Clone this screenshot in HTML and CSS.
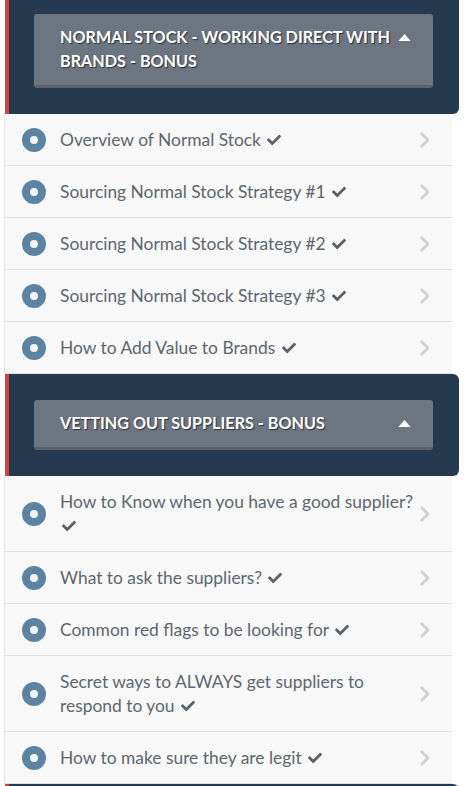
FILE: index.html
```html
<!DOCTYPE html>
<html lang="en">
<head>
  <meta charset="UTF-8">
  <meta name="viewport" content="width=device-width, initial-scale=1.0">
  <title>Course curriculum</title>
  <link rel="stylesheet" href="styles.css">
</head>
<body>
  <div class="curriculum">

    <div class="section">
      <div class="section-header">
        <div class="section-title">
          <span class="title-text">NORMAL STOCK - WORKING DIRECT WITH BRANDS - BONUS</span>
          <svg class="caret" viewBox="0 0 14 8"><path d="M0 8 L7 0 L14 8 Z" fill="#fff"/></svg>
        </div>
      </div>
      <ul class="lesson-list">
        <li class="lesson">
          <span class="dot"></span>
          <span class="lesson-name">Overview of Normal Stock <svg class="check" viewBox="0 0 512 512"><path d="M173.9 439.4L7.5 273c-10-10-10-26.2 0-36.2l36.2-36.2c10-10 26.2-10 36.2 0L192 312.7 432.1 72.6c10-10 26.2-10 36.2 0l36.2 36.2c10 10 10 26.2 0 36.2L210.1 439.4c-10 10-26.2 10-36.2 0z"/></svg></span>
          <svg class="chevron" viewBox="0 0 10 16"><path d="M2 1 L9 8 L2 15" fill="none" stroke="currentColor" stroke-width="2.8"/></svg>
        </li>
        <li class="lesson">
          <span class="dot"></span>
          <span class="lesson-name">Sourcing Normal Stock Strategy #1 <svg class="check" viewBox="0 0 512 512"><path d="M173.9 439.4L7.5 273c-10-10-10-26.2 0-36.2l36.2-36.2c10-10 26.2-10 36.2 0L192 312.7 432.1 72.6c10-10 26.2-10 36.2 0l36.2 36.2c10 10 10 26.2 0 36.2L210.1 439.4c-10 10-26.2 10-36.2 0z"/></svg></span>
          <svg class="chevron" viewBox="0 0 10 16"><path d="M2 1 L9 8 L2 15" fill="none" stroke="currentColor" stroke-width="2.8"/></svg>
        </li>
        <li class="lesson">
          <span class="dot"></span>
          <span class="lesson-name">Sourcing Normal Stock Strategy #2 <svg class="check" viewBox="0 0 512 512"><path d="M173.9 439.4L7.5 273c-10-10-10-26.2 0-36.2l36.2-36.2c10-10 26.2-10 36.2 0L192 312.7 432.1 72.6c10-10 26.2-10 36.2 0l36.2 36.2c10 10 10 26.2 0 36.2L210.1 439.4c-10 10-26.2 10-36.2 0z"/></svg></span>
          <svg class="chevron" viewBox="0 0 10 16"><path d="M2 1 L9 8 L2 15" fill="none" stroke="currentColor" stroke-width="2.8"/></svg>
        </li>
        <li class="lesson">
          <span class="dot"></span>
          <span class="lesson-name">Sourcing Normal Stock Strategy #3 <svg class="check" viewBox="0 0 512 512"><path d="M173.9 439.4L7.5 273c-10-10-10-26.2 0-36.2l36.2-36.2c10-10 26.2-10 36.2 0L192 312.7 432.1 72.6c10-10 26.2-10 36.2 0l36.2 36.2c10 10 10 26.2 0 36.2L210.1 439.4c-10 10-26.2 10-36.2 0z"/></svg></span>
          <svg class="chevron" viewBox="0 0 10 16"><path d="M2 1 L9 8 L2 15" fill="none" stroke="currentColor" stroke-width="2.8"/></svg>
        </li>
        <li class="lesson">
          <span class="dot"></span>
          <span class="lesson-name">How to Add Value to Brands <svg class="check" viewBox="0 0 512 512"><path d="M173.9 439.4L7.5 273c-10-10-10-26.2 0-36.2l36.2-36.2c10-10 26.2-10 36.2 0L192 312.7 432.1 72.6c10-10 26.2-10 36.2 0l36.2 36.2c10 10 10 26.2 0 36.2L210.1 439.4c-10 10-26.2 10-36.2 0z"/></svg></span>
          <svg class="chevron" viewBox="0 0 10 16"><path d="M2 1 L9 8 L2 15" fill="none" stroke="currentColor" stroke-width="2.8"/></svg>
        </li>
      </ul>
    </div>

    <div class="section">
      <div class="section-header">
        <div class="section-title">
          <span class="title-text">VETTING OUT SUPPLIERS - BONUS</span>
          <svg class="caret" viewBox="0 0 14 8"><path d="M0 8 L7 0 L14 8 Z" fill="#fff"/></svg>
        </div>
      </div>
      <ul class="lesson-list">
        <li class="lesson">
          <span class="dot"></span>
          <span class="lesson-name">How to Know when you have a good supplier? <svg class="check" viewBox="0 0 512 512"><path d="M173.9 439.4L7.5 273c-10-10-10-26.2 0-36.2l36.2-36.2c10-10 26.2-10 36.2 0L192 312.7 432.1 72.6c10-10 26.2-10 36.2 0l36.2 36.2c10 10 10 26.2 0 36.2L210.1 439.4c-10 10-26.2 10-36.2 0z"/></svg></span>
          <svg class="chevron" viewBox="0 0 10 16"><path d="M2 1 L9 8 L2 15" fill="none" stroke="currentColor" stroke-width="2.8"/></svg>
        </li>
        <li class="lesson">
          <span class="dot"></span>
          <span class="lesson-name">What to ask the suppliers? <svg class="check" viewBox="0 0 512 512"><path d="M173.9 439.4L7.5 273c-10-10-10-26.2 0-36.2l36.2-36.2c10-10 26.2-10 36.2 0L192 312.7 432.1 72.6c10-10 26.2-10 36.2 0l36.2 36.2c10 10 10 26.2 0 36.2L210.1 439.4c-10 10-26.2 10-36.2 0z"/></svg></span>
          <svg class="chevron" viewBox="0 0 10 16"><path d="M2 1 L9 8 L2 15" fill="none" stroke="currentColor" stroke-width="2.8"/></svg>
        </li>
        <li class="lesson">
          <span class="dot"></span>
          <span class="lesson-name">Common red flags to be looking for <svg class="check" viewBox="0 0 512 512"><path d="M173.9 439.4L7.5 273c-10-10-10-26.2 0-36.2l36.2-36.2c10-10 26.2-10 36.2 0L192 312.7 432.1 72.6c10-10 26.2-10 36.2 0l36.2 36.2c10 10 10 26.2 0 36.2L210.1 439.4c-10 10-26.2 10-36.2 0z"/></svg></span>
          <svg class="chevron" viewBox="0 0 10 16"><path d="M2 1 L9 8 L2 15" fill="none" stroke="currentColor" stroke-width="2.8"/></svg>
        </li>
        <li class="lesson">
          <span class="dot"></span>
          <span class="lesson-name">Secret ways to ALWAYS get suppliers to respond to you <svg class="check" viewBox="0 0 512 512"><path d="M173.9 439.4L7.5 273c-10-10-10-26.2 0-36.2l36.2-36.2c10-10 26.2-10 36.2 0L192 312.7 432.1 72.6c10-10 26.2-10 36.2 0l36.2 36.2c10 10 10 26.2 0 36.2L210.1 439.4c-10 10-26.2 10-36.2 0z"/></svg></span>
          <svg class="chevron" viewBox="0 0 10 16"><path d="M2 1 L9 8 L2 15" fill="none" stroke="currentColor" stroke-width="2.8"/></svg>
        </li>
        <li class="lesson">
          <span class="dot"></span>
          <span class="lesson-name">How to make sure they are legit <svg class="check" viewBox="0 0 512 512"><path d="M173.9 439.4L7.5 273c-10-10-10-26.2 0-36.2l36.2-36.2c10-10 26.2-10 36.2 0L192 312.7 432.1 72.6c10-10 26.2-10 36.2 0l36.2 36.2c10 10 10 26.2 0 36.2L210.1 439.4c-10 10-26.2 10-36.2 0z"/></svg></span>
          <svg class="chevron" viewBox="0 0 10 16"><path d="M2 1 L9 8 L2 15" fill="none" stroke="currentColor" stroke-width="2.8"/></svg>
        </li>
      </ul>
    </div>

    <div class="section">
      <div class="section-header"></div>
    </div>

  </div>
</body>
</html>
```

FILE: styles.css
```css
body {
  margin: 0;
  background: #fff;
  font-family: Lato, "Open Sans", sans-serif;
  overflow: hidden;
}

.curriculum {
  margin-top: -12px;
  padding-left: 5px;
  padding-right: 6px;
}

/* dark section bar with the red edge */
.section-header {
  background: #263a4f;
  border-left: 4px solid #d0413f;
  border-radius: 0 6px 6px 0;
  padding: 26px 26px 26px 25px;
  min-height: 40px;
}

.section-title {
  display: flex;
  align-items: flex-start;
  justify-content: space-between;
  background: #6c7580;
  border-bottom: 3px solid #5a616b;
  border-radius: 3px;
  padding: 11px 22px 12px 26px;
  color: #fff;
  font-weight: 700;
  font-size: 16.2px;
  line-height: 24px;
  text-shadow: 1px 1px 1px #2a323b;
}

.title-text {
  max-width: 336px;
}

.caret {
  width: 13px;
  height: 7px;
  margin-top: 9px;
  flex-shrink: 0;
}

.lesson-list {
  list-style: none;
  margin: 0 7px 0 -1px;
  padding: 0;
  background: #f8f8f8;
  border-left: 1px solid #e6e6e6;
}

.lesson {
  display: flex;
  align-items: center;
  padding: 14px 23px 13px 17px;
  border-bottom: 1px solid #e2e2e2;
  color: #5d6670;
  font-size: 17.4px;
  line-height: 24px;
}

.dot {
  width: 24px;
  height: 24px;
  box-sizing: border-box;
  border: 8px solid #5d83a3;
  border-radius: 50%;
  background: #f3f5f7;
  flex-shrink: 0;
  margin-right: 14px;
}

.lesson-name {
  flex: 1;
}

.check {
  width: 16px;
  height: 14px;
  fill: #59616a;
  vertical-align: -1px;
  margin-left: 1px;
}

.chevron {
  width: 10px;
  height: 16px;
  color: #d2d2d2;
  flex-shrink: 0;
}
```
